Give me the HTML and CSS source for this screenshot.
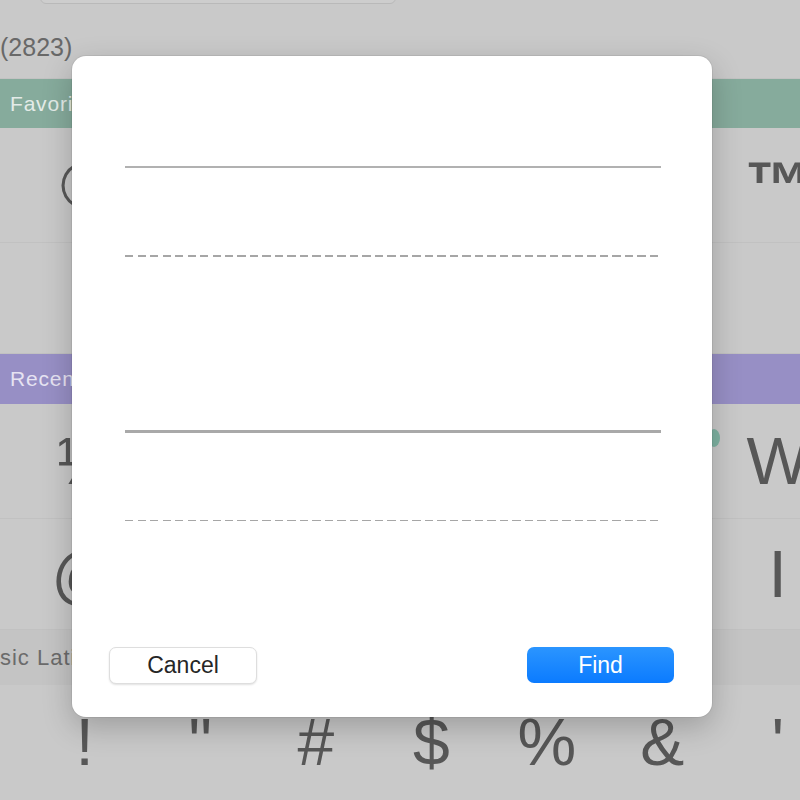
FILE: index.html
```html
<!DOCTYPE html>
<html lang="en">
<head>
    <meta charset="UTF-8">
    <meta name="viewport" content="width=device-width, initial-scale=1.0">
    <title>Find Character</title>
    <link rel="stylesheet" href="styles.css">
</head>
<body>
    <!-- character viewer behind the sheet -->
    <div class="viewer">
        <div class="search"></div>
        <div class="count">(2823)</div>

        <h2 class="group-title favorites">Favorites</h2>
        <div class="row">
            <span class="glyph">©</span>
            <span class="glyph"></span>
            <span class="glyph"></span>
            <span class="glyph"></span>
            <span class="glyph"></span>
            <span class="glyph"></span>
            <span class="glyph tm">™</span>
        </div>
        <div class="row row-short"></div>

        <h2 class="group-title recent">Recent</h2>
        <div class="row">
            <span class="glyph">½</span>
            <span class="glyph"></span>
            <span class="glyph"></span>
            <span class="glyph"></span>
            <span class="glyph"></span>
            <span class="glyph"><span class="heart"></span></span>
            <span class="glyph">W</span>
        </div>
        <div class="row row-short">
            <span class="glyph">@</span>
            <span class="glyph"></span>
            <span class="glyph"></span>
            <span class="glyph"></span>
            <span class="glyph"></span>
            <span class="glyph"></span>
            <span class="glyph">I</span>
        </div>

        <h2 class="group-title plain"><span class="cut">Basic Latin</span></h2>
        <div class="row">
            <span class="glyph">!</span>
            <span class="glyph">"</span>
            <span class="glyph">#</span>
            <span class="glyph">$</span>
            <span class="glyph">%</span>
            <span class="glyph">&amp;</span>
            <span class="glyph">'</span>
        </div>
    </div>

    <!-- find sheet -->
    <div class="sheet">
        <div class="fields">
            <div class="rule rule-first"></div>
            <div class="dash dash-first"></div>
            <div class="rule rule-second"></div>
            <div class="dash dash-second"></div>
        </div>
        <div class="actions">
            <button type="button" class="btn btn-cancel">Cancel</button>
            <button type="button" class="btn btn-find">Find</button>
        </div>
    </div>
</body>
</html>
```

FILE: styles.css
```css
body {
    margin: 0;
    padding: 0;
    font-family: "Liberation Sans", Arial, sans-serif;
    background-color: #c9c9c9;
    overflow: hidden;
}

.viewer {
    height: 800px;
    color: #575757;
}

.search {
    width: 354px;
    height: 30px;
    margin: -28px 0 0 40px;
    border: 1px solid #b9b9b9;
    border-radius: 6px;
    background-color: #cdcdcd;
}

.count {
    height: 46px;
    padding-top: 28px;
    font-size: 25px;
    line-height: 30px;
    color: #686868;
    border-bottom: 1px solid #c2c2c2;
}

.group-title {
    margin: 0;
    padding-left: 10px;
    font-size: 21px;
    letter-spacing: 0.8px;
    font-weight: normal;
    display: flex;
    align-items: center;
    overflow: hidden;
}

.favorites {
    height: 49px;
    background-color: #86ab9c;
    color: #e4ebe8;
}

.recent {
    height: 50px;
    background-color: #978fc5;
    color: #e6e3f2;
}

.plain {
    height: 55px;
    padding-left: 0;
    background-color: #c4c4c4;
    color: #6b6b6b;
}

.cut {
    margin-left: -29px;
    font-size: 22px;
    letter-spacing: 1px;
    white-space: nowrap;
}

.row {
    height: 115px;
    padding-left: 27px;
    display: grid;
    grid-template-columns: repeat(7, 115.5px);
    align-items: center;
    justify-items: center;
    border-bottom: 1px solid #c1c1c1;
    box-sizing: border-box;
}

.row-short {
    height: 111px;
}

.glyph {
    font-size: 66px;
    line-height: 1;
    position: relative;
}

.tm {
    font-weight: bold;
}

.heart {
    position: absolute;
    left: 46px;
    top: -32px;
    width: 12px;
    height: 18px;
    border-radius: 50%;
    background-color: #7fb3a3;
}

/* sheet */

.sheet {
    position: absolute;
    left: 72px;
    top: 56px;
    width: 640px;
    height: 661px;
    background-color: #fff;
    border-radius: 14px;
    box-shadow: 0 0 0 1px rgba(0, 0, 0, 0.06), 0 10px 30px rgba(0, 0, 0, 0.22);
    display: flex;
    flex-direction: column;
    box-sizing: border-box;
}

.fields {
    flex: 1;
    padding: 0 51px 0 53px;
}

.rule {
    height: 2px;
    background-color: #b1b1b1;
}

.rule-first {
    margin-top: 110px;
}

.rule-second {
    height: 3px;
    margin-top: 173px;
    background-color: #a9a9a9;
}

.dash {
    height: 1.5px;
    margin-right: 1px;
    background-image: repeating-linear-gradient(to right, #a6a6a6 0, #a6a6a6 8px, transparent 8px, transparent 12.5px);
}

.dash-first {
    margin-top: 87px;
}

.dash-second {
    margin-top: 87px;
}

.actions {
    display: flex;
    justify-content: space-between;
    padding: 0 38px 33px 37px;
}

.btn {
    width: 148px;
    height: 37px;
    font-family: "Liberation Sans", Arial, sans-serif;
    font-size: 23px;
    border-radius: 7px;
    cursor: pointer;
    padding: 0;
}

.btn-cancel {
    background-color: #fff;
    color: #262626;
    border: 1px solid #dedede;
    box-shadow: 0 1px 2px rgba(0, 0, 0, 0.12);
}

.btn-find {
    width: 147px;
    height: 36px;
    color: #fff;
    border: none;
    background: linear-gradient(#2b95ff, #0b7bff);
}
```
